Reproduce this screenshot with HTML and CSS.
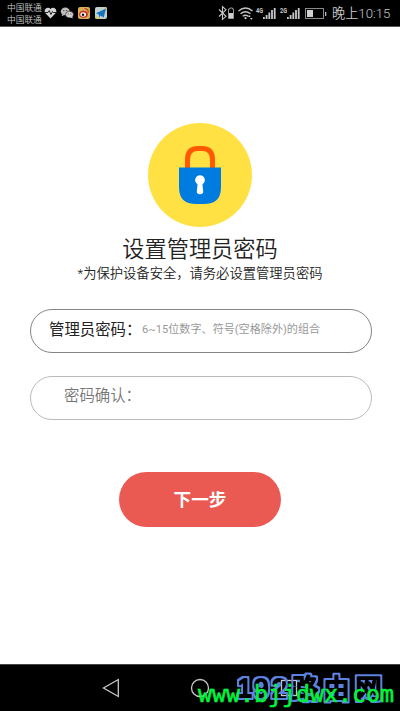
FILE: index.html
```html
<!DOCTYPE html>
<html lang="zh-CN">
<head>
<meta charset="utf-8">
<title>设置管理员密码</title>
<link rel="stylesheet" href="styles.css">
</head>
<body>
<div class="screen">
  <header class="status">
    <div class="carriers"><span>中国联通</span><span>中国联通</span></div>
    <svg class="notices" width="64" height="14" viewBox="0 0 64 14">
      <path d="M6.5 12.5 1.2 7C-1 3.6 3.7-.3 6.5 3 9.3-.3 14 3.6 11.8 7Z" fill="#d4d4d4"/>
      <path d="M1 6.5h3l1.3-2 1.6 4 1.6-3 .8 1H12" fill="none" stroke="#222" stroke-width="1"/>
      <ellipse cx="21.3" cy="5.4" rx="4.5" ry="3.9" fill="#bdbdbd"/>
      <path d="m18 8-.3 2.3 2.6-1.4z" fill="#bdbdbd"/>
      <ellipse cx="25.5" cy="8.6" rx="4" ry="3.3" fill="#d2d2d2" stroke="#111" stroke-width=".6"/>
      <path d="m26 11 2.6 1.5-.4-2.5z" fill="#d2d2d2"/>
      <g fill="#222"><circle cx="19.8" cy="4.5" r=".6"/><circle cx="22.8" cy="4.5" r=".6"/><circle cx="24.2" cy="8" r=".5"/><circle cx="26.9" cy="8" r=".5"/></g>
      <rect x="34" y="1" width="12" height="12" rx="2" fill="#d9ad55"/>
      <ellipse cx="39.5" cy="8.2" rx="4.3" ry="3.5" fill="#c72a20"/>
      <ellipse cx="39.2" cy="8.5" rx="2.8" ry="2.2" fill="#fff"/><circle cx="39" cy="8.7" r="1.3" fill="#111"/>
      <path d="M40.5 2.8c2.5-.4 4.2 1.4 3.6 3.7" fill="none" stroke="#c72a20" stroke-width="1.1"/>
      <rect x="51" y="1" width="12" height="12" rx="2" fill="#bfd0cf"/>
      <path d="M51 9v2q0 2 2 2h5zM60 1h1q2 0 2 2v4z" fill="#d6c67d"/>
      <path d="m52 7.2 10-4.8-2.3 9-3.1-2-1.5 2-.2-3z" fill="#1472bd"/>
    </svg>
    <svg class="signals" width="111" height="16" viewBox="0 0 111 16">
      <path d="m1 4.5 7 6.8-3.500 3V1.700L8 4.800 1 11.500" fill="none" stroke="#c8c8c8" stroke-width="1.100"/>
      <path d="M12 3h2.500v1H15.500v9.500h-5V4H12z" fill="none" stroke="#999"/><path d="M11 8h4v5h-4z" fill="#d0d0d0"/>
      <g fill="none" stroke="#c4c4c4" stroke-width="1.400"><path d="M20.500 6q7-6 14 0M22.500 8.800q5-4 10 0M24.700 11.300q2.800-2.200 5.600 0"/></g>
      <circle cx="27.500" cy="13.200" r="1.100" fill="#ccc"/><path d="m30 12 1.300-2 1.300 2zm2 1h2.600l-1.300 2z" fill="#ccc"/>
      <text class="network" x="38" y="7.500" textLength="7" lengthAdjust="spacingAndGlyphs">4G</text>
      <path d="M45 12h1.800v2H45zm2.700-2h1.800v4h-1.800zm2.700-2.500h1.800V14h-1.800zm2.700-2.500h1.800v9h-1.800zM55.800 3h1.800v11h-1.800z" fill="#c8c8c8"/>
      <text class="network" x="62" y="7.500" textLength="7" lengthAdjust="spacingAndGlyphs">2G</text>
      <path d="M69 12h1.800v2H69zm2.700-2h1.800v4h-1.800zm2.700-2.500h1.800V14h-1.800zm2.700-2.500h1.800v9h-1.800zM79.800 3h1.800v11h-1.800z" fill="#c8c8c8"/>
      <rect x="87.500" y="3.500" width="18" height="10" fill="none" stroke="#8a8a8a"/>
      <path d="M89 5h6v7h-6z" fill="#d0d0d0"/><path d="M107 7h1.300v4H107z" fill="#bbb"/>
    </svg>
    <span class="clock">晚上10:15</span>
  </header>
  <main>
    <svg class="lock" width="106" height="106" viewBox="0 0 106 106">
      <circle cx="53" cy="53" r="52" fill="#ffe144"/>
      <path d="M40.500 48V38q0-11.500 10-11.500h5q10 0 10 11.500v10" fill="none" stroke="#ff5a00" stroke-width="5"/>
      <path d="M32 45.500h42v20Q74 82 57 82h-8Q32 82 32 65.500Z" fill="#007bdf"/>
      <path d="M53 53.300a4.800 4.800 0 0 1 2.500 8.900l.7 7.300q.1 2.700-3.200 2.700t-3.200-2.700l.7-7.300A4.800 4.800 0 0 1 53 53.300Z" fill="#fff"/>
    </svg>
    <h1>设置管理员密码</h1>
    <p class="hint">*为保护设备安全，请务必设置管理员密码</p>
    <div class="field active"><span class="label">管理员密码：</span><span class="placeholder">6~15位数字、符号(空格除外)的组合</span></div>
    <div class="field confirm"><span class="label">密码确认：</span></div>
    <button class="next">下一步</button>
  </main>
  <footer class="nav">
    <svg class="watermark" width="400" height="46" viewBox="0 0 400 46">
      <filter id="outline" x="-5%" y="-20%" width="110%" height="140%" color-interpolation-filters="sRGB">
        <feMorphology in="SourceGraphic" operator="dilate" radius="2"/>
        <feComposite in2="SourceAlpha" operator="out"/>
      </filter>
      <g filter="url(#outline)">
        <text class="brand digits" y="32" x="237.500 254 272">192</text>
        <text class="brand" y="33" x="292 323.500 355.500">路由网</text>
      </g>
      <text class="site" x="198" y="36.500" textLength="196">www.bjjdwx.com</text>
    </svg>
    <svg class="controls" width="400" height="46" viewBox="0 0 400 46" fill="none" stroke="#c8c8c8" stroke-width="1.300">
      <path d="M118.300 14.500v17L103.500 23Z"/><circle cx="200" cy="23" r="8.500"/><rect x="281.500" y="15.500" width="15" height="15"/>
    </svg>
  </footer>
</div>
</body>
</html>
```
FILE: styles.css
```css
* { box-sizing: border-box; }
body { margin: 0; }
.screen {
  width: 400px;
  height: 711px;
  display: flex;
  flex-direction: column;
  overflow: hidden;
  background: #fff;
  color: #222;
  font-family: Roboto, "Noto Sans CJK SC", sans-serif;
}
.status {
  height: 27px;
  flex: none;
  display: flex;
  align-items: center;
  padding-left: 7px;
  background: #000;
  border-bottom: 1px solid #555;
  color: #c8c8c8;
}
.carriers {
  width: 36px;
  display: flex;
  flex-direction: column;
  padding-top: 1px;
  font-size: 8.7px;
  line-height: 12px;
  font-weight: 350;
  white-space: nowrap;
}
.notices { margin-left: 1px; }
.signals { margin-left: 110px; }
.network { font: bold 7px Roboto, sans-serif; fill: #ccc; }
.clock { margin-left: 3px; font-size: 13.2px; line-height: 20px; white-space: nowrap; padding-top: 2px; font-weight: 350; }
main {
  flex: 1;
  display: flex;
  flex-direction: column;
  align-items: center;
  padding-top: 95px;
}
.lock { flex: none; }
h1 {
  margin: 6px 0 0;
  font-size: 22.2px;
  line-height: 30px;
  font-weight: 350;
}
.hint { margin: 0; font-size: 13.3px; line-height: 20px; white-space: nowrap; font-weight: 350; }
.field {
  width: 342px;
  height: 44px;
  flex: none;
  display: flex;
  align-items: center;
  margin: 25px 0 0 2px;
  padding: 0 0 3px 18px;
  border: 1px solid #858585;
  border-radius: 22px;
  white-space: nowrap;
}
.label { width: 93px; font-size: 15.4px; line-height: 24px; }
.placeholder { color: #999; font-size: 11.1px; line-height: 20px; }
.confirm { margin-top: 23px; padding: 0 0 4px 33px; border-color: #bbb; color: #777; }
.confirm .label { font-weight: 350; }
.next {
  width: 162px;
  height: 55px;
  flex: none;
  margin-top: 52px;
  padding: 0 0 2px;
  border: 0;
  border-radius: 28px;
  background: #eb5a52;
  color: #fff;
  font: 700 17.6px/26px "Noto Sans CJK SC", sans-serif;
}
.nav {
  height: 47px;
  flex: none;
  position: relative;
  background: #000;
  border-top: 1px solid #444;
}
.controls { display: block; }
.watermark { position: absolute; left: 0; top: 0; }
.brand {
  font: 400 26px "Noto Sans CJK SC", sans-serif;
  fill: #5b82e0;
  stroke: #5b82e0;
  stroke-width: 2px;
  stroke-linejoin: round;
}
.digits { font-family: "Liberation Sans", sans-serif; }
.site { font: 23.25px "DejaVu Sans Mono", monospace; fill: #00f43c; stroke: #00f43c; stroke-width: .6px; }
```
